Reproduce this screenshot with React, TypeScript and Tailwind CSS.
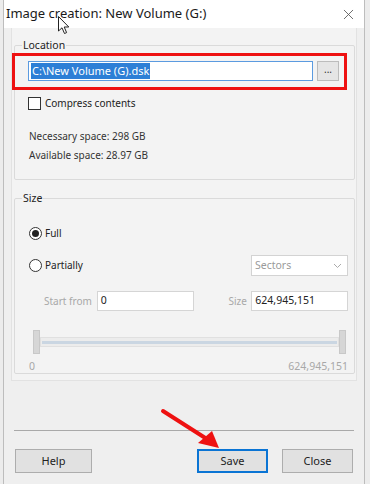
import { X } from 'lucide-react';

const font = { fontFamily: '"Noto Sans", "Open Sans", sans-serif' };

const TextBox = ({ value, className = '' }: { value: string; className?: string }) => (
  <div className={`flex h-[20px] items-center border border-[#d5d5d5] bg-white pl-[3px] text-[10.5px] text-[#222] ${className}`}>
    {value}
  </div>
);

const WinButton = ({ label, focused = false, className = '' }: { label: string; focused?: boolean; className?: string }) => (
  <button
    className={`flex h-[24px] items-center justify-center bg-[#e1e1e1] text-[11px] text-[#222] ${
      focused ? 'border-2 border-[#0a74d4]' : 'border border-[#adadad]'
    } ${className}`}
  >
    {label}
  </button>
);

const App = () => {
  return (
    <div className="relative h-[484px] w-[370px] overflow-hidden bg-[#ececec]" style={font}>
      <div className="ml-[3px] flex h-full w-[362px] flex-col border-x border-[#bdbdbd]">
        {/* title bar */}
        <div className="flex h-[28px] items-center justify-between bg-white pl-[2px] pr-[7px]">
          <span className="text-[13px] text-[#1a1a1a]">Image creation: New Volume (G:)</span>
          <X size={17} strokeWidth={1.2} className="text-[#555]" />
        </div>

        <div className="flex flex-1 flex-col bg-[#efefef]">
          {/* upper panel */}
          <div className="mx-[7px] flex flex-col border-x border-b border-[#e2e2e2] bg-[#f3f3f3] px-[2px] pb-[6px] pt-[10px]">
            <fieldset className="h-[142px] w-[341px] min-w-0 rounded-[2px] border border-[#dadada] pl-[13px] pr-[12px]">
              <legend className="ml-[-6px] px-[1px] text-[10.5px] leading-[14px] text-[#222]">Location</legend>
              <div className="mt-[9px] flex items-center gap-[4px]">
                <div className="flex h-[20px] w-[285px] items-center border border-[#5b9be0] bg-white pl-[2px] text-[11px]">
                  <span className="bg-[#2d7fd6] px-[1px] text-white">C:\New Volume (G).dsk</span>
                </div>
                <div className="flex h-[20px] w-[22px] items-center justify-center border border-[#bcbcbc] bg-[#e5e5e5] pb-[4px] text-[10px] text-[#333]">
                  ...
                </div>
              </div>
              <div className="mt-[15px] flex items-center gap-[4px]">
                <div className="h-[13px] w-[13px] border border-[#333] bg-white" />
                <span className="text-[10px] text-[#222]">Compress contents</span>
              </div>
              <div className="mt-[16px] pl-[1px] text-[10px] leading-[19px] text-[#333]">
                <div>Necessary space: 298 GB</div>
                <div>Available space: 28.97 GB</div>
              </div>
            </fieldset>

            <div className="mt-[11px]" />

            <fieldset className="h-[183px] w-[341px] min-w-0 rounded-[2px] border border-[#dadada] pl-[14px] pr-[6px]">
              <legend className="ml-[-7px] px-[1px] text-[10.5px] leading-[14px] text-[#222]">Size</legend>
              <div className="mt-[21px] flex items-center gap-[3px]">
                <div className="flex h-[13px] w-[13px] items-center justify-center rounded-full border border-[#333] bg-white">
                  <div className="h-[7px] w-[7px] rounded-full bg-[#222]" />
                </div>
                <span className="text-[10px] text-[#222]">Full</span>
              </div>
              <div className="mt-[14px] flex items-center justify-between">
                <div className="flex items-center gap-[3px]">
                  <div className="h-[13px] w-[13px] rounded-full border border-[#333] bg-white" />
                  <span className="text-[10px] text-[#222]">Partially</span>
                </div>
                <div className="flex h-[21px] w-[97px] items-center justify-between border border-[#d3d3d3] bg-white pl-[3px] pr-[5px] text-[10.5px] text-[#9a9a9a]">
                  Sectors
                  <svg width="9" height="6" viewBox="0 0 9 6">
                    <path d="M1 1l3.5 3.5L8 1" fill="none" stroke="#aaa" strokeWidth="1" />
                  </svg>
                </div>
              </div>
              <div className="mt-[15px] flex items-center">
                <span className="ml-[15px] w-[53px] text-[10px] text-[#a8a8a8]">Start from</span>
                <TextBox value="0" className="w-[98px]" />
                <span className="ml-[34px] w-[23px] text-[10px] text-[#a8a8a8]">Size</span>
                <TextBox value="624,945,151" className="w-[97px]" />
              </div>
              {/* slider */}
              <div className="mt-[19px] flex items-center pr-[2px]">
                <div className="ml-[4px] h-[24px] w-[7px] border border-[#c8c8c8] bg-[#d6d6d6]" />
                <div className="flex h-[10px] flex-1 items-center border border-[#e0e0e0] bg-[#ececec] px-[1px]">
                  <div className="h-[3px] w-full bg-[#cad6e2]" />
                </div>
                <div className="h-[24px] w-[7px] border border-[#c8c8c8] bg-[#d6d6d6]" />
              </div>
              <div className="mt-[5px] flex justify-between text-[10.5px] text-[#a8a8a8]">
                <span>0</span>
                <span>624,945,151</span>
              </div>
            </fieldset>
          </div>

          <div className="flex-1" />

          {/* footer */}
          <div className="mx-[10px] border-t border-[#a9a9a9]" />
          <div className="mb-[11px] mt-[18px] flex items-center px-[11px]">
            <WinButton label="Help" className="w-[77px]" />
            <div className="flex-1" />
            <WinButton label="Save" focused className="w-[71px]" />
            <WinButton label="Close" className="ml-[14px] w-[71px]" />
          </div>
        </div>
      </div>

      {/* annotation: red box around path */}
      <div className="absolute left-[12px] top-[53px] h-[37px] w-[335px] border-[3px] border-[#ee1111]" />

      {/* annotation: red arrow */}
      <svg className="absolute left-0 top-0" width="370" height="484" viewBox="0 0 370 484">
        <line x1="163" y1="411" x2="210" y2="441" stroke="#ee1111" strokeWidth="4" strokeLinecap="round" />
        <path d="M219 448 L198 443 L212 431 Z" fill="#ee1111" />
      </svg>

      {/* mouse cursor */}
      <svg className="absolute left-[58px] top-[16px]" width="12" height="19" viewBox="0 0 12 19">
        <path d="M0.5 0.5 L0.5 15 L4 11.8 L6.5 17.5 L8.6 16.6 L6.2 11 L10.8 11 Z" fill="#fff" stroke="#222" strokeWidth="1" />
      </svg>
    </div>
  );
};

export default App;
